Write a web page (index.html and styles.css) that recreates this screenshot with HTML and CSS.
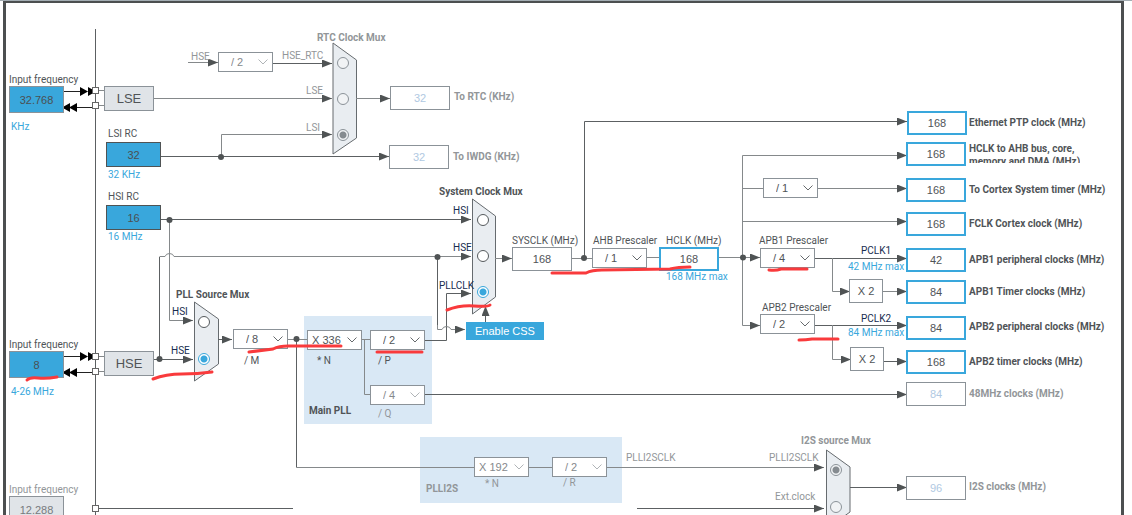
FILE: index.html
```html
<!DOCTYPE html>
<html lang="en">
<head>
<meta charset="utf-8">
<title>Clock Configuration</title>
<link rel="stylesheet" href="styles.css">
</head>
<body>
<main class="canvas">
  <div class="frame"></div>
  <section class="panel main-pll"></section>
  <section class="panel plli2s"></section>

  <svg class="layer" aria-hidden="true">
    <defs>
      <marker id="tip" markerUnits="userSpaceOnUse" markerWidth="10" markerHeight="8" refX="10" refY="4" orient="auto"><path d="M0 0L10 4L0 8z" fill="#4f5354"/></marker>
    </defs>
    <g class="mux-body">
      <path d="M333 43L356.500 60V138L333 154z"/>
      <path d="M194.500 302L218.500 319V364L194.500 381z"/>
      <path d="M472.500 199L495.500 216V297L472.500 314z"/>
      <path d="M826.500 450L850 467V512L826.500 529z"/>
    </g>
    <g class="wire">
      <path d="M95.500 29V520"/>
      <path d="M161 156.500H389" marker-end="url(#tip)"/>
      <path d="M273 63.500H332" marker-end="url(#tip)"/>
      <path d="M161 219.500H471" marker-end="url(#tip)"/>
      <path d="M159.500 257V359"/>
      <path d="M154 359.500H193" marker-end="url(#tip)"/>
      <path d="M218 339.500H232" marker-end="url(#tip)"/>
      <path d="M296.500 339V467.500"/>
      <path d="M425 340.500H446.500V293.500H471" marker-end="url(#tip)"/>
      <path d="M425 394.500H907" marker-end="url(#tip)"/>
      <path d="M485.500 322V306" marker-end="url(#tip)"/>
      <path d="M437.500 257V325"/>
      <path d="M99 508.500H293"/>
      <path d="M637 508.500H824" marker-end="url(#tip)"/>
      <path d="M850 487.500H907" marker-end="url(#tip)"/>
      <path d="M584.500 258V121.500H907" marker-end="url(#tip)"/>
      <path d="M815 258.500H907" marker-end="url(#tip)"/>
      <path d="M815 325.500H907" marker-end="url(#tip)"/>
      <path d="M884 361.500H907" marker-end="url(#tip)"/>
    </g>
    <g class="wire soft">
      <path d="M188 62.500H218" marker-end="url(#tip)"/>
      <path d="M154 98.500H332" marker-end="url(#tip)"/>
      <path d="M221.500 157V134.500H332" marker-end="url(#tip)"/>
      <path d="M356 98.500H390" marker-end="url(#tip)"/>
      <path d="M169.500 220V320.500H193" marker-end="url(#tip)"/>
      <path d="M159.500 256.500H165Q166 253.500 169.500 253.500T174 256.500H471" marker-end="url(#tip)"/>
      <path d="M288 339.500H307M362 339.500H370M364.500 339V394.500H370M296.500 467.500H474M529 467.500H552"/>
      <path d="M607 467.500H824" marker-end="url(#tip)"/>
      <path d="M437.500 325V329.500H442Q443 326.500 446.500 326.500T451 329.500H465" marker-end="url(#tip)"/>
      <path d="M495 258.500H512" marker-end="url(#tip)"/>
      <path d="M572 258.500H592M647 257.500H660M719 257.500H743"/>
      <path d="M742.500 258V155.500H907" marker-end="url(#tip)"/>
      <path d="M743 188.500H763"/>
      <path d="M818 188.500H907" marker-end="url(#tip)"/>
      <path d="M743 221.500H907" marker-end="url(#tip)"/>
      <path d="M743 257.500H760" marker-end="url(#tip)"/>
      <path d="M742.500 257V325.500H760" marker-end="url(#tip)"/>
      <path d="M832.500 258V291.500H850" marker-end="url(#tip)"/>
      <path d="M883 291.500H907" marker-end="url(#tip)"/>
      <path d="M832.500 325V359.500H851" marker-end="url(#tip)"/>
      <path d="M99 90.500H104M99 105.500H104M99 356.500H104M99 371.500H104"/>
    </g>
    <g class="dot">
      <circle cx="221" cy="157" r="3"/><circle cx="169.500" cy="220" r="3"/><circle cx="159.500" cy="359" r="3"/>
      <circle cx="296.500" cy="339" r="3"/><circle cx="437.500" cy="257" r="3"/><circle cx="584" cy="258" r="3"/><circle cx="743" cy="257.500" r="3"/>
    </g>
    <g class="pin-wire">
      <path d="M64 91.500H82M76 107.500H92M64 356.500H82M76 372.500H92"/>
      <path d="M80 87L88 91.500L80 96zM88 87L96 91.500L88 96zM77 103L69 107.500L77 112zM70 103L62 107.500L70 112z"/>
      <path d="M80 352L88 356.500L80 361zM88 352L96 356.500L88 361zM77 368L69 372.500L77 377zM70 368L62 372.500L70 377z"/>
    </g>
    <g class="pin">
      <rect x="92.500" y="87.500" width="6" height="6"/><rect x="92.500" y="102.500" width="6" height="6"/>
      <rect x="92.500" y="353.500" width="6" height="6"/><rect x="92.500" y="368.500" width="6" height="6"/>
      <rect x="92.500" y="505.500" width="6" height="6"/>
    </g>
  </svg>

  <label class="text lse-in-label" for="lse-in">Input frequency</label>
  <input class="box source pin-in lse-in" id="lse-in" value="32.768">
  <span class="text blue lse-unit">KHz</span>
  <div class="box osc lse">LSE</div>
  <label class="text lsi-label" for="lsi">LSI RC</label>
  <input class="box source rc lsi" id="lsi" value="32" readonly>
  <span class="text blue lsi-unit">32 KHz</span>
  <label class="text hsi-label" for="hsi">HSI RC</label>
  <input class="box source rc hsi" id="hsi" value="16" readonly>
  <span class="text blue hsi-unit">16 MHz</span>
  <label class="text hse-in-label" for="hse-in">Input frequency</label>
  <input class="box source pin-in hse-in" id="hse-in" value="8">
  <span class="text blue hse-unit">4-26 MHz</span>
  <div class="box osc hse">HSE</div>
  <label class="text off i2s-in-label" for="i2s-in">Input frequency</label>
  <input class="box pin-in i2s-in" id="i2s-in" value="12.288" readonly>

  <span class="text off rtc-hse">HSE</span>
  <select class="box pick off rtc-div" aria-label="RTC HSE divider"><option>/ 2</option></select>
  <div role="radiogroup" aria-labelledby="rtc-title">
    <b class="text off rtc-title" id="rtc-title">RTC Clock Mux</b>
    <label class="text off rtc-l1" for="rtc1">HSE_RTC</label>
    <label class="text off rtc-l2" for="rtc2">LSE</label>
    <label class="text off rtc-l3" for="rtc3">LSI</label>
    <input class="radio off rtc-r1" type="radio" name="rtc" id="rtc1">
    <input class="radio off rtc-r2" type="radio" name="rtc" id="rtc2">
    <input class="radio off rtc-r3" type="radio" name="rtc" id="rtc3" checked>
  </div>
  <input class="box value off rtc-out" id="rtc-out" value="32" readonly>
  <label class="text bold off rtc-out-label" for="rtc-out">To RTC (KHz)</label>
  <input class="box value off iwdg-out" id="iwdg-out" value="32" readonly>
  <label class="text bold off iwdg-out-label" for="iwdg-out">To IWDG (KHz)</label>

  <div role="radiogroup" aria-labelledby="pll-title">
    <b class="text pll-title" id="pll-title">PLL Source Mux</b>
    <label class="text signal pll-l1" for="pll1">HSI</label>
    <label class="text signal pll-l2" for="pll2">HSE</label>
    <input class="radio pll-r1" type="radio" name="pll" id="pll1">
    <input class="radio pll-r2" type="radio" name="pll" id="pll2" checked>
  </div>
  <select class="box pick div-m" id="div-m"><option>/ 8</option></select>
  <label class="text div-m-label" for="div-m">/ M</label>
  <select class="box pick wide mul-n" id="mul-n"><option>X 336</option></select>
  <label class="text mul-n-label" for="mul-n">* N</label>
  <select class="box pick div-p" id="div-p"><option>/ 2</option></select>
  <label class="text div-p-label" for="div-p">/ P</label>
  <select class="box pick off div-q" id="div-q"><option>/ 4</option></select>
  <label class="text off div-q-label" for="div-q">/ Q</label>
  <b class="text main-pll-title">Main PLL</b>

  <b class="text off plli2s-title">PLLI2S</b>
  <select class="box pick wide off i2s-n" id="i2s-n"><option>X 192</option></select>
  <label class="text off i2s-n-label" for="i2s-n">* N</label>
  <select class="box pick off i2s-r" id="i2s-r"><option>/ 2</option></select>
  <label class="text off i2s-r-label" for="i2s-r">/ R</label>
  <span class="text off i2s-clk">PLLI2SCLK</span>

  <div role="radiogroup" aria-labelledby="sys-title">
    <b class="text sys-title" id="sys-title">System Clock Mux</b>
    <label class="text signal sys-l1" for="sys1">HSI</label>
    <label class="text signal sys-l2" for="sys2">HSE</label>
    <label class="text signal sys-l3" for="sys3">PLLCLK</label>
    <input class="radio sys-r1" type="radio" name="sys" id="sys1">
    <input class="radio sys-r2" type="radio" name="sys" id="sys2">
    <input class="radio sys-r3" type="radio" name="sys" id="sys3" checked>
  </div>
  <button class="css-button" type="button">Enable CSS</button>

  <label class="text sysclk-label" for="sysclk">SYSCLK (MHz)</label>
  <input class="box value sysclk" id="sysclk" value="168" readonly>
  <label class="text ahb-label" for="ahb">AHB Prescaler</label>
  <select class="box pick ahb" id="ahb"><option>/ 1</option></select>
  <label class="text hclk-label" for="hclk">HCLK (MHz)</label>
  <input class="box value live hclk" id="hclk" value="168">
  <span class="text blue hclk-max">168 MHz max</span>

  <select class="box pick cortex" aria-label="Cortex System timer prescaler"><option>/ 1</option></select>
  <label class="text apb1-label" for="apb1">APB1 Prescaler</label>
  <select class="box pick apb1" id="apb1"><option>/ 4</option></select>
  <span class="text signal pclk1">PCLK1</span>
  <span class="text blue pclk1-max">42 MHz max</span>
  <div class="box times apb1-x2">X 2</div>
  <label class="text apb2-label" for="apb2">APB2 Prescaler</label>
  <select class="box pick apb2" id="apb2"><option>/ 2</option></select>
  <span class="text signal pclk2">PCLK2</span>
  <span class="text blue pclk2-max">84 MHz max</span>
  <div class="box times apb2-x2">X 2</div>

  <input class="box value live out out1" id="out1" value="168">
  <label class="text bold out-label out1-label" for="out1">Ethernet PTP clock (MHz)</label>
  <input class="box value live out out2" id="out2" value="168">
  <label class="text bold out-label clipped out2-label" for="out2">HCLK to AHB bus, core,<br>memory and DMA (MHz)</label>
  <input class="box value live out out3" id="out3" value="168">
  <label class="text bold out-label out3-label" for="out3">To Cortex System timer (MHz)</label>
  <input class="box value live out out4" id="out4" value="168">
  <label class="text bold out-label out4-label" for="out4">FCLK Cortex clock (MHz)</label>
  <input class="box value live out out5" id="out5" value="42">
  <label class="text bold out-label out5-label" for="out5">APB1 peripheral clocks (MHz)</label>
  <input class="box value live out out6" id="out6" value="84">
  <label class="text bold out-label out6-label" for="out6">APB1 Timer clocks (MHz)</label>
  <input class="box value live out out7" id="out7" value="84">
  <label class="text bold out-label out7-label" for="out7">APB2 peripheral clocks (MHz)</label>
  <input class="box value live out out8" id="out8" value="168">
  <label class="text bold out-label out8-label" for="out8">APB2 timer clocks (MHz)</label>
  <input class="box value off out out9" id="out9" value="84" readonly>
  <label class="text bold off out-label out9-label" for="out9">48MHz clocks (MHz)</label>

  <div role="radiogroup" aria-labelledby="i2s-title">
    <b class="text off i2s-title" id="i2s-title">I2S source Mux</b>
    <label class="text off i2s-l1" for="i2s1">PLLI2SCLK</label>
    <label class="text off i2s-l2" for="i2s2">Ext.clock</label>
    <input class="radio off i2s-r1" type="radio" name="i2s" id="i2s1" checked>
    <input class="radio off i2s-r2" type="radio" name="i2s" id="i2s2">
  </div>
  <input class="box value off out out10" id="out10" value="96" readonly>
  <label class="text bold off out-label out10-label" for="out10">I2S clocks (MHz)</label>

  <svg class="layer marks" aria-hidden="true">
    <path d="M27 380Q30 377 38 378T57 377"/>
    <path d="M153 379Q166 374 182 374T212 372"/>
    <path d="M249 352L273 349Q279 346 288 346H341"/>
    <path d="M377 352H422"/>
    <path d="M447 310Q460 305 474 306T490 305"/>
    <path d="M552 273H586Q592 270 602 270L670 269Q678 267 690 267"/>
    <path d="M769 270Q776 271 781 269H807"/>
    <path d="M799 340Q806 340 812 339H838"/>
  </svg>
</main>
</body>
</html>
```
FILE: styles.css
```css
* { box-sizing: border-box; }

body {
  margin: 0;
  background: #fff;
  color: #505457;
  font: 11px/12px "Liberation Sans", Arial, sans-serif;
}

.canvas {
  position: relative;
  height: 100vh;
  overflow: hidden;
  border-top: 1px solid #a3adb3;
}
.canvas > *, .text, .radio { position: absolute; }
.canvas > [role="radiogroup"] { position: static; }

.frame {
  inset: 0 8px 0 3px;
  border: solid #4c4f50;
  border-width: 2px 3px 0;
}

/* Diagram coordinates start at the window's top edge, above the 1px rule. */
.layer {
  left: 0;
  top: -1px;
  width: 100%;
  height: 100vh;
  overflow: visible;
}
.wire { fill: none; stroke: #5c6062; }
.soft { stroke: #85898b; }
.dot { fill: #4f5354; }
.mux-body { fill: #e9edf1; stroke: #666b6f; }
.pin-wire { fill: #000; stroke: #222; stroke-width: 1; }
.pin-wire path + path { stroke: none; }
.pin { fill: #fff; stroke: #666; }
.marks { fill: none; stroke: #f93a3c; stroke-width: 3; stroke-linecap: round; pointer-events: none; }

.text { font: 10px/13px Roboto, "Liberation Sans", sans-serif; white-space: nowrap; }
b.text, .bold { font-weight: 700; }
.text.off { color: #929699; }
.blue { color: #39a7dc; }
.signal { color: #172c4f; }

.box {
  margin: 0;
  padding: 0;
  border: 1px solid #8b9298;
  border-radius: 0;
  background: #fff;
  color: #505457;
  font: 11px/12px "Liberation Sans", Arial, sans-serif;
  text-align: center;
  outline: 0;
}
.pin-in { left: 9px; width: 55px; height: 27px; background: #e0e4e8; color: #777b7e; }
.source { background: #39a7dc; color: #4b4f52; }
.rc { left: 106px; width: 55px; height: 25px; border-color: #4f5354; }
.osc { left: 104px; width: 50px; height: 25px; background: #e0e4e8; font-size: 13px; line-height: 24px; }
.value { width: 60px; height: 24px; }
.value.off { color: #b0c9e2; }
.live { border: 2px solid #39a7dc; }
.times { width: 34px; height: 24px; line-height: 22px; }
.pick {
  appearance: none;
  width: 55px;
  height: 20px;
  padding-left: 12px;
  text-align: left;
  background: #fff url("data:image/svg+xml,%3Csvg xmlns='http://www.w3.org/2000/svg' width='10' height='6'%3E%3Cpath d='M.5.5L5 5L9.500.5' fill='none' stroke='%23666a6d'/%3E%3C/svg%3E") no-repeat right 4px center;
}
.pick.wide { padding-left: 4px; }
.pick.off {
  color: #85898c;
  background-image: url("data:image/svg+xml,%3Csvg xmlns='http://www.w3.org/2000/svg' width='10' height='6'%3E%3Cpath d='M.5.5L5 5L9.500.5' fill='none' stroke='%23b0b4b7'/%3E%3C/svg%3E");
}
.radio {
  appearance: none;
  width: 12px;
  height: 12px;
  margin: 0;
  border: 1px solid #555a5d;
  border-radius: 50%;
  background: #fff;
}
.radio:checked { border-color: #39a7dc; background: radial-gradient(circle, #39a7dc 3px, #fff 4px); }
.radio.off { border-color: #8b9298; background: #f1f3f5; }
.radio.off:checked { background: radial-gradient(circle, #858b90 3px, #f1f3f5 4px); }
.css-button {
  left: 466px; top: 321px; width: 78px; height: 18px;
  padding: 0;
  border: 0;
  background: #39a7dc;
  color: #fff;
  font: 11px/18px "Liberation Sans", Arial, sans-serif;
}
.panel { background: #d9e8f5; }
.main-pll { left: 304px; top: 315px; width: 128px; height: 108px; }
.plli2s { left: 420px; top: 436px; width: 202px; height: 66px; }

/* Sources */
.lse-in-label { left: 9px; top: 72px; }
.lse-in { top: 85px; }
.lse-unit { left: 11px; top: 119px; }
.lse { top: 85px; }
.lsi-label { left: 108px; top: 126px; }
.lsi { top: 141px; }
.lsi-unit { left: 108px; top: 167px; }
.hsi-label { left: 108px; top: 189px; }
.hsi { top: 204px; }
.hsi-unit { left: 108px; top: 229px; }
.hse-in-label { left: 9px; top: 337px; }
.hse-in { top: 350px; }
.hse-unit { left: 11px; top: 384px; }
.hse { top: 350px; }
.i2s-in-label { left: 9px; top: 482px; }
.i2s-in { top: 495px; }

/* RTC */
.rtc-hse { left: 191px; top: 49px; }
.rtc-div { left: 218px; top: 51px; }
.rtc-title { left: 317px; top: 30px; }
.rtc-l1 { left: 282px; top: 48px; }
.rtc-l2 { left: 306px; top: 83px; }
.rtc-l3 { left: 306px; top: 120px; }
.rtc-r1 { left: 337px; top: 56px; }
.rtc-r2 { left: 337px; top: 92px; }
.rtc-r3 { left: 337px; top: 128px; }
.rtc-out { left: 390px; top: 85px; }
.rtc-out-label { left: 454px; top: 89px; }
.iwdg-out { left: 389px; top: 144px; }
.iwdg-out-label { left: 453px; top: 149px; }

/* PLL */
.pll-title { left: 176px; top: 287px; }
.pll-l1 { left: 172px; top: 304px; }
.pll-l2 { left: 171px; top: 343px; }
.pll-r1 { left: 198px; top: 315px; }
.pll-r2 { left: 198px; top: 352px; }
.div-m { left: 233px; top: 328px; }
.div-m-label { left: 244px; top: 353px; }
.mul-n { left: 307px; top: 329px; }
.mul-n-label { left: 317px; top: 353px; }
.div-p { left: 370px; top: 329px; }
.div-p-label { left: 378px; top: 353px; }
.div-q { left: 370px; top: 384px; }
.div-q-label { left: 378px; top: 406px; }
.main-pll-title { left: 309px; top: 403px; }

/* PLLI2S */
.plli2s-title { left: 426px; top: 481px; }
.i2s-n { left: 474px; top: 456px; }
.i2s-n-label { left: 485px; top: 476px; }
.i2s-r { left: 552px; top: 456px; }
.i2s-r-label { left: 563px; top: 475px; }
.i2s-clk { left: 626px; top: 450px; }
.i2s-title { left: 801px; top: 433px; }
.i2s-l1 { left: 769px; top: 450px; }
.i2s-l2 { left: 775px; top: 489px; }
.i2s-r1 { left: 830px; top: 463px; }
.i2s-r2 { left: 830px; top: 500px; }

/* System clock */
.sys-title { left: 439px; top: 184px; }
.sys-l1 { left: 453px; top: 203px; }
.sys-l2 { left: 453px; top: 240px; }
.sys-l3 { left: 439px; top: 278px; }
.sys-r1 { left: 477px; top: 213px; }
.sys-r2 { left: 477px; top: 249px; }
.sys-r3 { left: 477px; top: 285px; }
.sysclk-label { left: 512px; top: 233px; }
.sysclk { left: 512px; top: 246px; }
.ahb-label { left: 593px; top: 233px; }
.ahb { left: 592px; top: 247px; }
.hclk-label { left: 666px; top: 233px; }
.hclk { left: 659px; top: 246px; }
.hclk-max { left: 666px; top: 269px; }

/* Bus prescalers */
.cortex { left: 763px; top: 177px; }
.apb1-label { left: 759px; top: 233px; }
.apb1 { left: 760px; top: 247px; }
.pclk1 { left: 861px; top: 243px; }
.pclk1-max { left: 848px; top: 259px; }
.apb1-x2 { left: 849px; top: 278px; }
.apb2-label { left: 762px; top: 300px; }
.apb2 { left: 760px; top: 313px; }
.pclk2 { left: 861px; top: 311px; }
.pclk2-max { left: 848px; top: 325px; }
.apb2-x2 { left: 850px; top: 346px; }

/* Outputs */
.out { left: 906px; }
.out-label { left: 969px; }
.clipped { height: 21px; overflow: hidden; }
.out1 { left: 907px; top: 110px; }
.out1-label { top: 115px; }
.out2 { top: 141px; }
.out2-label { top: 141px; }
.out3 { top: 177px; }
.out3-label { top: 182px; }
.out4 { top: 211px; }
.out4-label { top: 216px; }
.out5 { top: 247px; }
.out5-label { top: 252px; }
.out6 { top: 279px; }
.out6-label { top: 284px; }
.out7 { top: 315px; }
.out7-label { top: 319px; }
.out8 { top: 349px; }
.out8-label { top: 354px; }
.out9 { top: 381px; }
.out9-label { top: 386px; }
.out10 { top: 475px; }
.out10-label { top: 479px; }
```
